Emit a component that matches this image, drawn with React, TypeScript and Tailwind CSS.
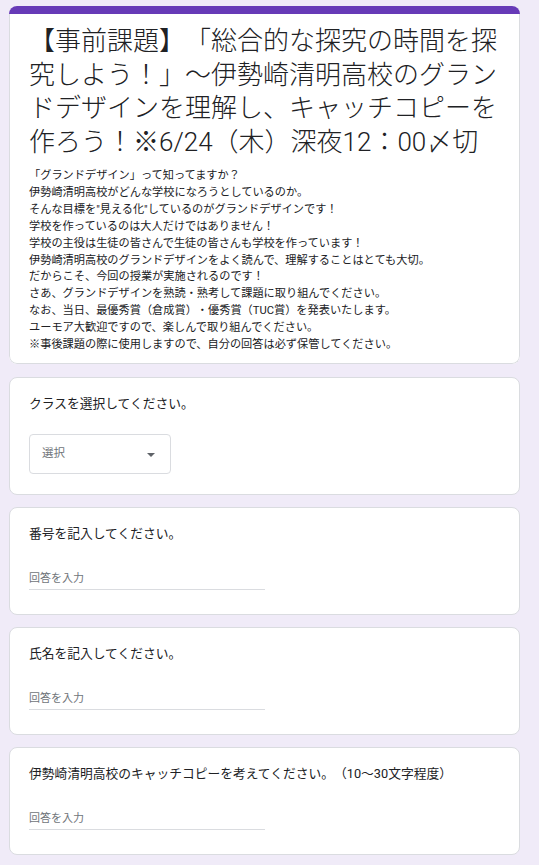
import React from 'react'

const font = { fontFamily: 'Roboto, "Noto Sans CJK JP", sans-serif' }

const titleLines = [
  '【事前課題】「総合的な探究の時間を探',
  '究しよう！」～伊勢崎清明高校のグラン',
  'ドデザインを理解し、キャッチコピーを',
  '作ろう！※6/24（木）深夜12：00〆切',
]

const descLines = [
  '「グランドデザイン」って知ってますか？',
  '伊勢崎清明高校がどんな学校になろうとしているのか。',
  'そんな目標を"見える化"しているのがグランドデザインです！',
  '学校を作っているのは大人だけではありません！',
  '学校の主役は生徒の皆さんで生徒の皆さんも学校を作っています！',
  '伊勢崎清明高校のグランドデザインをよく読んで、理解することはとても大切。',
  'だからこそ、今回の授業が実施されるのです！',
  'さあ、グランドデザインを熟読・熟考して課題に取り組んでください。',
  'なお、当日、最優秀賞（倉成賞）・優秀賞（TUC賞）を発表いたします。',
  'ユーモア大歓迎ですので、楽しんで取り組んでください。',
  '※事後課題の際に使用しますので、自分の回答は必ず保管してください。',
]

function Card({ children }: { children: React.ReactNode }) {
  return (
    <div className="w-[511px] bg-white border border-[#dadce0] rounded-[8px] pl-[19px] pr-[19px] pt-[16px] pb-[24px]">
      {children}
    </div>
  )
}

function TextQuestion({ label }: { label: string }) {
  return (
    <Card>
      <p className="text-[12.75px] leading-[20px] text-[#202124] whitespace-nowrap">{label}</p>
      <div className="mt-[27px] w-[236px] border-b border-[#dadce0] pb-[2px]">
        <p className="text-[11px] leading-[16px] text-[#70757a]">回答を入力</p>
      </div>
    </Card>
  )
}

export default function App() {
  return (
    <div className="min-h-screen bg-[#f0ebf8] pt-[6px] pl-[9px] pb-[10px] [text-spacing-trim:space-all]" style={font}>
      <div className="flex flex-col gap-[12px]">
        <div className="w-[511px] rounded-[8px] overflow-hidden bg-white mb-[1px]">
          <div className="h-[8px] bg-[#673ab7]" />
          <div className="border-x border-b border-[#dadce0] rounded-b-[8px] pl-[19px] pr-[19px] pt-[11px] pb-[9px]">
            <h1 className="text-[26px] leading-[33.5px] text-[#202124] font-light">
              {titleLines.map((l, i) => (
                <div key={i} className="whitespace-nowrap">{l}</div>
              ))}
            </h1>
            <div className="mt-[9px] text-[11.2px] leading-[16.9px] text-[#202124]">
              {descLines.map((l, i) => (
                <div key={i} className="whitespace-nowrap">{l}</div>
              ))}
            </div>
          </div>
        </div>

        <div className="w-[511px] bg-white border border-[#dadce0] rounded-[8px] pl-[19px] pr-[19px] pt-[16px] pb-[20px]">
          <p className="text-[12.75px] leading-[20px] text-[#202124]">クラスを選択してください。</p>
          <div className="mt-[20px] w-[142px] h-[40px] border border-[#dadce0] rounded-[4px] flex items-center justify-between pl-[12px] pr-[15px]">
            <span className="text-[11.5px] text-[#70757a]">選択</span>
            <svg width="8" height="4" viewBox="0 0 8 4" className="mt-[2px]">
              <path d="M0 0h8L4 4z" fill="#5f6368" />
            </svg>
          </div>
        </div>

        <TextQuestion label="番号を記入してください。" />
        <TextQuestion label="氏名を記入してください。" />
        <TextQuestion label="伊勢崎清明高校のキャッチコピーを考えてください。（10～30文字程度）" />
      </div>
    </div>
  )
}
